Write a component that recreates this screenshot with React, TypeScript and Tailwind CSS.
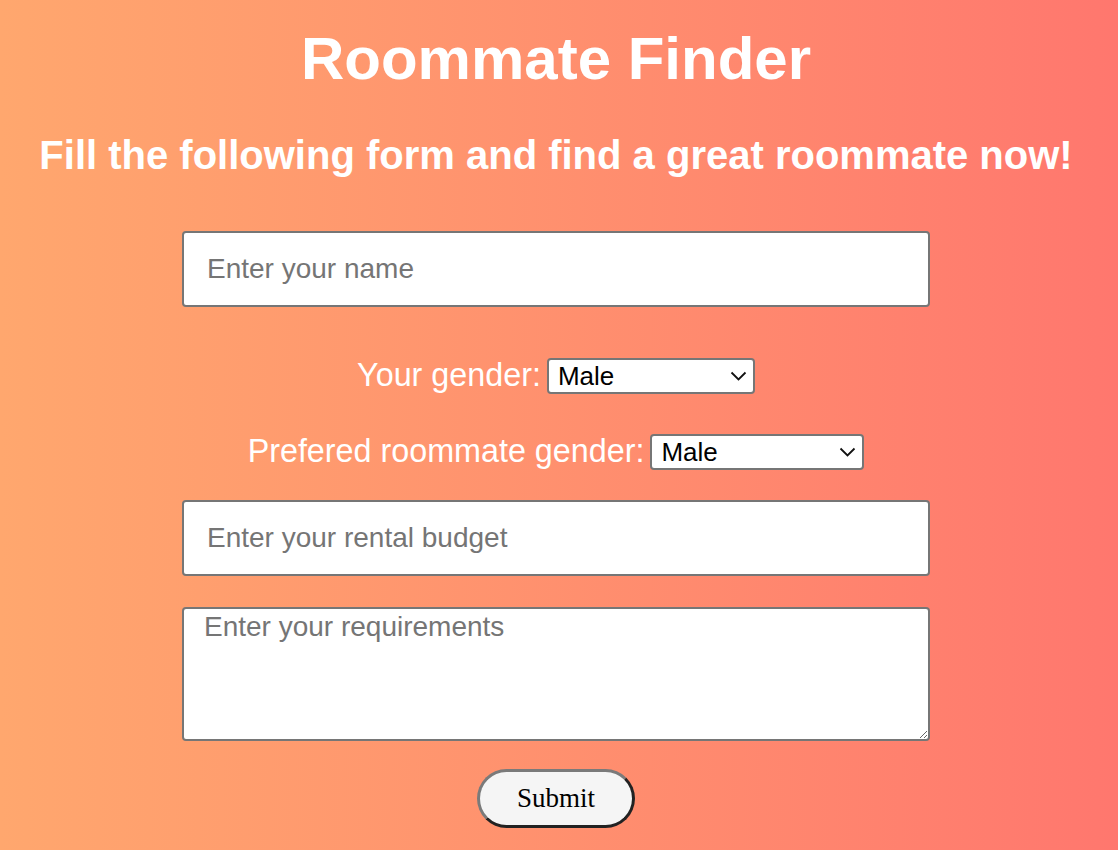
import { useState } from 'react';

function GenderSelect({ width }: { width: string }) {
    return (
        <div className={`relative ${width}`}>
            <select
                defaultValue="Male"
                className="appearance-none w-full h-[36px] bg-white text-black border-2 border-[#767676] rounded-[4px] pl-[9px] pr-8 text-[26px] leading-[30px] font-['Liberation_Sans',Arial,sans-serif] outline-none"
            >
                <option>Male</option>
                <option>Female</option>
                <option>Any</option>
            </select>
            <svg
                className="absolute right-[8px] top-[13px] pointer-events-none"
                width="17"
                height="10"
                viewBox="0 0 17 10"
                fill="none"
            >
                <path d="M1.5 1.5 L8.5 8.5 L15.5 1.5" stroke="#111" strokeWidth="1.8" />
            </svg>
        </div>
    );
}

export default function App() {
    const [name, setName] = useState('');
    const [budget, setBudget] = useState('');
    const [notes, setNotes] = useState('');

    return (
        <div className="min-h-screen w-full bg-gradient-to-r from-[#ffa76e] to-[#ff776e] font-['Liberation_Sans',Arial,sans-serif] text-white">
            <div className="flex flex-col items-center pr-[6px] pt-[24px]">
                <h1 className="text-[60px] leading-[69px] font-bold">Roommate Finder</h1>
                <h2 className="mt-[39px] text-[40px] leading-[46px] font-bold">
                    Fill the following form and find a great roommate now!
                </h2>

                <input
                    value={name}
                    onChange={(e) => setName(e.target.value)}
                    placeholder="Enter your name"
                    className="mt-[53px] w-[748px] h-[76px] bg-white text-black border-2 border-[#767676] rounded-[4px] pl-[23px] text-[28px] placeholder:text-[#757575] outline-none"
                />

                <div className="mt-[50px] flex items-center gap-[6px] h-[37px]">
                    <label className="text-[32.3px] leading-[37px]">Your gender:</label>
                    <GenderSelect width="w-[208px]" />
                </div>

                <div className="mt-[39px] flex items-center gap-[6px] h-[37px]">
                    <label className="text-[32.3px] leading-[37px]">Prefered roommate gender:</label>
                    <GenderSelect width="w-[214px]" />
                </div>

                <input
                    value={budget}
                    onChange={(e) => setBudget(e.target.value)}
                    placeholder="Enter your rental budget"
                    className="mt-[30px] w-[748px] h-[76px] bg-white text-black border-2 border-[#767676] rounded-[4px] pl-[23px] text-[28px] placeholder:text-[#757575] outline-none"
                />

                <textarea
                    value={notes}
                    onChange={(e) => setNotes(e.target.value)}
                    placeholder="Enter your requirements"
                    className="mt-[31px] w-[748px] h-[134px] bg-white text-black border-2 border-[#767676] rounded-[4px] px-[20px] py-[2px] text-[28px] leading-[32px] placeholder:text-[#757575] outline-none resize"
                />

                <button className="mt-[28px] w-[158px] h-[59px] rounded-full bg-[#f5f5f5] text-black border-[3px] border-t-[#7a7a7a] border-l-[#7a7a7a] border-r-[#222] border-b-[#222] font-['Liberation_Serif','Times_New_Roman',serif] text-[27px]">
                    Submit
                </button>
            </div>
        </div>
    );
}
